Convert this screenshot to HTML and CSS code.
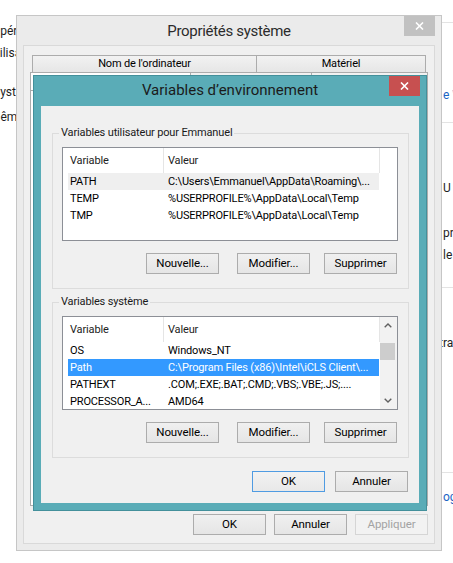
FILE: index.html
```html
<!DOCTYPE html>
<html lang="fr">
<head>
<meta charset="utf-8">
<title>Variables d’environnement</title>
<link rel="stylesheet" href="styles.css">
</head>
<body>
<div class="desktop">
  <div class="bg-left">
    <p class="bg-text bl1">Opérations</p>
    <p class="bg-text bl2">Utilisateurs</p>
    <p class="bg-text bl3">Système</p>
    <p class="bg-text bl4">Mêmes</p>
  </div>
  <div class="bg-right">
    <div class="bg-sep s1"></div>
    <p class="bg-text link br1">e Windows</p>
    <div class="bg-sep s2"></div>
    <p class="bg-text br2">U</p>
    <p class="bg-text br3">propriétés</p>
    <p class="bg-text br4">le</p>
    <div class="bg-sep s3"></div>
    <p class="bg-text br5">tra</p>
    <div class="bg-sep s4"></div>
    <p class="bg-text link br6">og</p>
  </div>

  <div class="win sysprops">
    <div class="titlebar sp-title">
      <span class="title">Propriétés système</span>
      <span class="close close-gray"><svg width="9" height="8" viewBox="0 0 9 8"><path d="M1 0.5 L8 7.5 M8 0.5 L1 7.5" stroke="#fff" stroke-width="1.6" fill="none"/></svg></span>
    </div>
    <div class="sp-panel">
      <div class="tabs tabs1">
        <div class="tab tab-name">Nom de l'ordinateur</div>
        <div class="tab tab-hw">Matériel</div>
      </div>
      <div class="tabs tabs2">
        <div class="tab tab-adv selected"></div>
        <div class="tab tab-prot"></div>
        <div class="tab tab-remote"></div>
      </div>
      <div class="tab-page"></div>
      <div class="btn-row sp-btns">
        <button class="btn">OK</button>
        <button class="btn">Annuler</button>
        <button class="btn" disabled>Appliquer</button>
      </div>
    </div>
  </div>

  <div class="win envvars">
    <div class="titlebar ev-title">
      <span class="title">Variables d’environnement</span>
      <span class="close close-red"><svg width="9" height="8" viewBox="0 0 9 8"><path d="M1 0.5 L8 7.5 M8 0.5 L1 7.5" stroke="#fff" stroke-width="1.6" fill="none"/></svg></span>
    </div>
    <div class="ev-body">
      <fieldset class="group">
        <legend>Variables utilisateur pour Emmanuel</legend>
        <div class="lv">
          <div class="lv-main">
            <div class="lv-head"><div class="hc c1">Variable</div><div class="hc c2">Valeur</div></div>
            <div class="lv-row sel-dim"><div class="c1">PATH</div><div class="c2">C:\Users\Emmanuel\AppData\Roaming\...</div></div>
            <div class="lv-row"><div class="c1">TEMP</div><div class="c2">%USERPROFILE%\AppData\Local\Temp</div></div>
            <div class="lv-row"><div class="c1">TMP</div><div class="c2">%USERPROFILE%\AppData\Local\Temp</div></div>
          </div>
        </div>
        <div class="btn-row grp-btns">
          <button class="btn b-new">Nouvelle...</button>
          <button class="btn b-mod">Modifier...</button>
          <button class="btn">Supprimer</button>
        </div>
      </fieldset>

      <fieldset class="group group2">
        <legend>Variables système</legend>
        <div class="lv">
          <div class="lv-main">
            <div class="lv-head"><div class="hc c1">Variable</div><div class="hc c2">Valeur</div></div>
            <div class="lv-row"><div class="c1">OS</div><div class="c2">Windows_NT</div></div>
            <div class="lv-row sel"><div class="c1">Path</div><div class="c2">C:\Program Files (x86)\Intel\iCLS Client\...</div></div>
            <div class="lv-row"><div class="c1">PATHEXT</div><div class="c2">.COM;.EXE;.BAT;.CMD;.VBS;.VBE;.JS;....</div></div>
            <div class="lv-row"><div class="c1">PROCESSOR_A...</div><div class="c2">AMD64</div></div>
          </div>
          <div class="scrollbar">
            <div class="sb-btn"><svg width="8" height="5" viewBox="0 0 8 5"><path d="M0.7 4.3 L4 1 L7.3 4.3" stroke="#606060" stroke-width="1.4" fill="none"/></svg></div>
            <div class="sb-track"><div class="sb-thumb"></div></div>
            <div class="sb-btn"><svg width="8" height="5" viewBox="0 0 8 5"><path d="M0.7 0.7 L4 4 L7.3 0.7" stroke="#606060" stroke-width="1.4" fill="none"/></svg></div>
          </div>
        </div>
        <div class="btn-row grp-btns">
          <button class="btn b-new">Nouvelle...</button>
          <button class="btn b-mod">Modifier...</button>
          <button class="btn">Supprimer</button>
        </div>
      </fieldset>

      <div class="btn-row ev-btns">
        <button class="btn default">OK</button>
        <button class="btn">Annuler</button>
      </div>
    </div>
  </div>
</div>
</body>
</html>
```

FILE: styles.css
```css
* { box-sizing: border-box; }
html, body { margin: 0; padding: 0; }
body {
  width: 453px;
  height: 563px;
  overflow: hidden;
  background: #fff;
  font-family: "Segoe UI", Roboto, "Noto Sans", sans-serif;
  font-size: 11px;
  letter-spacing: -0.15px;
  color: #000;
}
.desktop {
  position: relative;
  width: 453px;
  height: 563px;
  overflow: hidden;
  display: flex;
}

/* background page fragments */
.bg-left { width: 16px; flex: none; }
.bg-right { width: 11px; flex: none; margin-left: auto; }
.bg-text {
  margin: 0;
  line-height: 16px;
  height: 16px;
  white-space: nowrap;
  color: #1e1e1e;
  font-size: 12px;
  letter-spacing: 0;
}
.link { color: #1a64c4; }
.bl1 { margin-top: 23px; margin-left: -8px; }
.bl2 { margin-top: 6px; margin-left: -12px; }
.bl3 { margin-top: 23px; margin-left: -7px; }
.bl4 { margin-top: 9px; margin-left: -10px; }
.bg-sep { height: 1px; background: #e3e3e3; width: 11px; }
.s1 { margin-top: 22px; }
.br1 { margin-top: 64px; padding-left: 1px; }
.s2 { margin-top: 19px; }
.br2 { margin-top: 57px; padding-left: 1px; }
.br3 { margin-top: 29px; padding-left: 1px; }
.br4 { margin-top: 6px; padding-left: 1px; }
.s3 { margin-top: 24px; }
.br5 { margin-top: 47px; margin-left: -3px; }
.s4 { margin-top: 121px; }
.br6 { margin-top: 16px; padding-left: 1px; }

/* windows */
.win { position: absolute; display: flex; flex-direction: column; }
.sysprops {
  left: 16px; top: 15px; width: 426px; height: 536px;
  background: #ebebeb;
  border: 1px solid #c6c6c6;
}
.envvars {
  left: 33px; top: 75px; width: 394px; height: 436px;
  background: #5aacb7;
  border: 1px solid #43909b;
}
.titlebar {
  display: grid;
  grid-template-columns: 1fr auto 1fr;
  align-items: start;
  flex: none;
}
.titlebar .title { grid-column: 2; font-size: 15px; white-space: nowrap; letter-spacing: 0; }
.titlebar .close {
  grid-column: 3;
  justify-self: end;
  width: 31px;
  height: 20px;
  display: flex;
  align-items: center;
  justify-content: center;
}
.sp-title { height: 29px; }
.sp-title .title { line-height: 30px; color: #2b2b2b; letter-spacing: -0.3px; }
.sp-title .close { margin-right: 6px; }
.close-gray { background: #c1c1c1; }
.ev-title { height: 30px; }
.ev-title .title { line-height: 28px; color: #1b1b1b; }
.ev-title .close { margin-right: 6px; }
.close-red { background: #c75050; }

/* system properties panel */
.sp-panel {
  margin: 0 6px 6px 6px;
  height: 499px;
  background: #f0f0f0;
  border: 1px solid #d9d9d9;
  padding: 9px 6px 8px 6px;
  display: flex;
  flex-direction: column;
}
.tabs { display: flex; flex: none; }
.tabs1 { height: 17px; margin: 0 2px 0 2px; }
.tabs2 { height: 18px; }
.tab {
  border: 1px solid #acacac;
  border-bottom: none;
  background: linear-gradient(#f2f2f2, #e6e6e6);
  text-align: center;
  line-height: 16px;
  white-space: nowrap;
  overflow: hidden;
}
.tab-name { width: 224px; border-right: none; }
.tab-hw { flex: 1; }
.tab-adv { width: 160px; border-right: none; }
.tab-prot { width: 121px; border-right: none; }
.tab-remote { flex: 1; }
.tab.selected { background: #fff; }
.tab-page {
  height: 416px;
  flex: none;
  background: #fff;
  border: 1px solid #acacac;
}

/* buttons */
.btn-row { display: flex; justify-content: flex-end; flex: none; }
.btn {
  width: 73px;
  height: 21px;
  padding: 0;
  margin: 0;
  font-family: inherit;
  font-size: 11.5px;
  letter-spacing: -0.1px;
  line-height: 19px;
  color: #000;
  border: 1px solid #acacac;
  background: linear-gradient(#f0f0f0, #e5e5e5);
  border-radius: 0;
}
.btn:disabled { color: #a3a3a3; border-color: #d5d5d5; background: #f2f2f2; }
.btn.default { border-color: #4f9be2; background: linear-gradient(#f2f2f2, #e8e8e8); }
.sp-btns { gap: 8px; margin-top: 8px; }

/* environment variables body */
.ev-body {
  margin: 0 7px 7px 7px;
  height: 397px;
  background: #f0f0f0;
  padding: 19px 10px 11px 11px;
  display: flex;
  flex-direction: column;
}
.group {
  margin: 0;
  min-width: 0;
  padding: 0 10px 14px 9px;
  border: 1px solid #dcdcdc;
  flex: none;
}
.group legend {
  padding: 0 2px;
  margin-left: -3px;
  line-height: 16px;
  color: #1a1a1a;
}
.group2 { margin-top: 5px; }
.grp-btns { margin-top: 12px; padding-right: 1px; }
.b-new { margin-right: 18px; }
.b-mod { margin-right: 14px; }
.ev-btns { margin-top: 13px; gap: 10px; padding-right: 1px; }

/* list views */
.lv {
  margin-top: 6px;
  height: 94px;
  border: 1px solid #8c8f96;
  background: #fff;
  display: flex;
  overflow: hidden;
}
.lv-main { flex: 1; min-width: 0; }
.lv-head { display: flex; height: 25px; }
.hc {
  line-height: 26px;
  border-right: 1px solid #e5e5e5;
  white-space: nowrap;
  color: #222;
}
.hc.c1 { width: 101px; padding-left: 7px; }
.hc.c2 { width: 216px; padding-left: 4px; }
.lv-row {
  display: flex;
  height: 17px;
  line-height: 17px;
  margin-left: 5px;
  width: 311px;
}
.lv-row .c1 { width: 95px; padding-left: 2px; white-space: nowrap; overflow: hidden; }
.lv-row .c2 { width: 216px; padding-left: 5px; white-space: nowrap; overflow: hidden; }
.lv-row.sel-dim { background: #efefef; }
.lv-row.sel { background: #3399ff; color: #fff; }

.scrollbar {
  width: 17px;
  flex: none;
  background: #f2f2f2;
  display: flex;
  flex-direction: column;
}
.sb-btn {
  height: 17px;
  flex: none;
  display: flex;
  align-items: center;
  justify-content: center;
  padding-right: 2px;
}
.sb-track { flex: 1; }
.sb-thumb { margin-top: 9px; width: 15px; height: 17px; background: #cdcdcd; }
```
